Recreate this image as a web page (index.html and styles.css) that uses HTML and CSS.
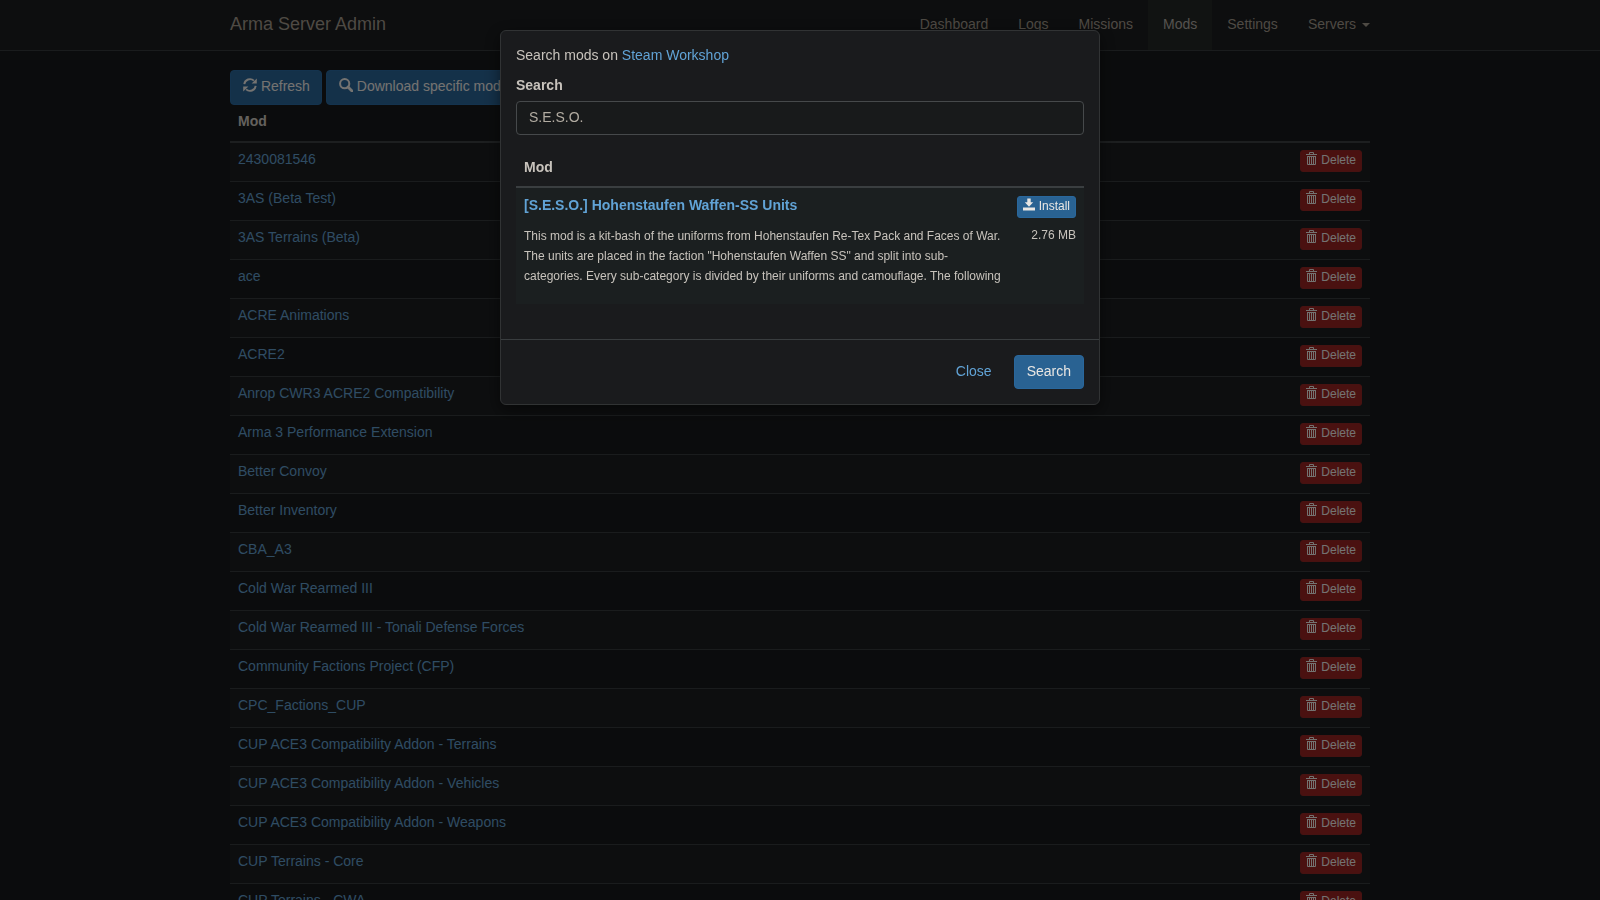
FILE: index.html
```html
<!DOCTYPE html>
<html lang="en">
<head>
<meta charset="utf-8">
<title>Arma Server Admin</title>
<link rel="stylesheet" href="styles.css">
</head>
<body>
<svg class="sprite" aria-hidden="true">
  <symbol id="i-refresh" viewBox="0 0 14 14">
    <path d="M1.3 6.2A5.8 5.8 0 0 1 10.9 2.6M12.7 7.8A5.8 5.8 0 0 1 3.1 11.4" fill="none" stroke="currentColor" stroke-width="1.9"/>
    <path d="M13.8.4V5.6H8.6zM.2 13.6V8.4H5.4z" fill="currentColor"/>
  </symbol>
  <symbol id="i-search" viewBox="0 0 14 14">
    <circle cx="5.7" cy="5.7" r="4.6" fill="none" stroke="currentColor" stroke-width="2"/>
    <path d="M9 9l4 4" stroke="currentColor" stroke-width="2.8" stroke-linecap="round"/>
  </symbol>
  <symbol id="i-trash" viewBox="0 0 12 13">
    <path d="M3.5 2V.5h4V2M0 2.5h11M1 4.5h9M1.5 4v8.5h8V4M3.5 5v7M5.5 5v7M7.5 5v7" fill="none" stroke="currentColor"/>
  </symbol>
  <symbol id="i-install" viewBox="0 0 12 12">
    <path d="M4.3 0h3.4v3.8h2.5L6 8.2 1.8 3.8h2.5zM0 9h12v3H0z" fill="currentColor"/>
  </symbol>
</svg>
<div class="page">
  <nav class="navbar">
    <div class="container navbar-inner">
      <a class="brand" href="#">Arma Server Admin</a>
      <ul class="nav">
        <li><a href="#">Dashboard</a></li>
        <li><a href="#">Logs</a></li>
        <li><a href="#">Missions</a></li>
        <li><a class="active" href="#">Mods</a></li>
        <li><a href="#">Settings</a></li>
        <li><a href="#">Servers <span class="caret"></span></a></li>
      </ul>
    </div>
  </nav>
  <main class="container">
    <div class="toolbar">
      <button class="btn btn-primary" type="button"><svg class="icon"><use href="#i-refresh"/></svg> Refresh</button>
      <button class="btn btn-primary" type="button"><svg class="icon"><use href="#i-search"/></svg> Download specific mod</button>
    </div>
    <table class="table mods">
      <thead><tr><th colspan="2">Mod</th></tr></thead>
      <tbody>
        <tr><td><a href="#">2430081546</a></td><td class="action"><button class="btn btn-xs btn-danger" type="button"><svg class="icon"><use href="#i-trash"/></svg> Delete</button></td></tr>
        <tr><td><a href="#">3AS (Beta Test)</a></td><td class="action"><button class="btn btn-xs btn-danger" type="button"><svg class="icon"><use href="#i-trash"/></svg> Delete</button></td></tr>
        <tr><td><a href="#">3AS Terrains (Beta)</a></td><td class="action"><button class="btn btn-xs btn-danger" type="button"><svg class="icon"><use href="#i-trash"/></svg> Delete</button></td></tr>
        <tr><td><a href="#">ace</a></td><td class="action"><button class="btn btn-xs btn-danger" type="button"><svg class="icon"><use href="#i-trash"/></svg> Delete</button></td></tr>
        <tr><td><a href="#">ACRE Animations</a></td><td class="action"><button class="btn btn-xs btn-danger" type="button"><svg class="icon"><use href="#i-trash"/></svg> Delete</button></td></tr>
        <tr><td><a href="#">ACRE2</a></td><td class="action"><button class="btn btn-xs btn-danger" type="button"><svg class="icon"><use href="#i-trash"/></svg> Delete</button></td></tr>
        <tr><td><a href="#">Anrop CWR3 ACRE2 Compatibility</a></td><td class="action"><button class="btn btn-xs btn-danger" type="button"><svg class="icon"><use href="#i-trash"/></svg> Delete</button></td></tr>
        <tr><td><a href="#">Arma 3 Performance Extension</a></td><td class="action"><button class="btn btn-xs btn-danger" type="button"><svg class="icon"><use href="#i-trash"/></svg> Delete</button></td></tr>
        <tr><td><a href="#">Better Convoy</a></td><td class="action"><button class="btn btn-xs btn-danger" type="button"><svg class="icon"><use href="#i-trash"/></svg> Delete</button></td></tr>
        <tr><td><a href="#">Better Inventory</a></td><td class="action"><button class="btn btn-xs btn-danger" type="button"><svg class="icon"><use href="#i-trash"/></svg> Delete</button></td></tr>
        <tr><td><a href="#">CBA_A3</a></td><td class="action"><button class="btn btn-xs btn-danger" type="button"><svg class="icon"><use href="#i-trash"/></svg> Delete</button></td></tr>
        <tr><td><a href="#">Cold War Rearmed III</a></td><td class="action"><button class="btn btn-xs btn-danger" type="button"><svg class="icon"><use href="#i-trash"/></svg> Delete</button></td></tr>
        <tr><td><a href="#">Cold War Rearmed III - Tonali Defense Forces</a></td><td class="action"><button class="btn btn-xs btn-danger" type="button"><svg class="icon"><use href="#i-trash"/></svg> Delete</button></td></tr>
        <tr><td><a href="#">Community Factions Project (CFP)</a></td><td class="action"><button class="btn btn-xs btn-danger" type="button"><svg class="icon"><use href="#i-trash"/></svg> Delete</button></td></tr>
        <tr><td><a href="#">CPC_Factions_CUP</a></td><td class="action"><button class="btn btn-xs btn-danger" type="button"><svg class="icon"><use href="#i-trash"/></svg> Delete</button></td></tr>
        <tr><td><a href="#">CUP ACE3 Compatibility Addon - Terrains</a></td><td class="action"><button class="btn btn-xs btn-danger" type="button"><svg class="icon"><use href="#i-trash"/></svg> Delete</button></td></tr>
        <tr><td><a href="#">CUP ACE3 Compatibility Addon - Vehicles</a></td><td class="action"><button class="btn btn-xs btn-danger" type="button"><svg class="icon"><use href="#i-trash"/></svg> Delete</button></td></tr>
        <tr><td><a href="#">CUP ACE3 Compatibility Addon - Weapons</a></td><td class="action"><button class="btn btn-xs btn-danger" type="button"><svg class="icon"><use href="#i-trash"/></svg> Delete</button></td></tr>
        <tr><td><a href="#">CUP Terrains - Core</a></td><td class="action"><button class="btn btn-xs btn-danger" type="button"><svg class="icon"><use href="#i-trash"/></svg> Delete</button></td></tr>
        <tr><td><a href="#">CUP Terrains - CWA</a></td><td class="action"><button class="btn btn-xs btn-danger" type="button"><svg class="icon"><use href="#i-trash"/></svg> Delete</button></td></tr>
      </tbody>
    </table>
  </main>
</div>
<div class="backdrop">
  <form class="modal" role="dialog" aria-modal="true">
    <div class="modal-body">
      <p>Search mods on <a href="#">Steam Workshop</a></p>
      <label for="query">Search</label>
      <input class="field" id="query" type="text" value="S.E.S.O.">
      <table class="table results">
        <thead><tr><th colspan="2">Mod</th></tr></thead>
        <tbody>
          <tr>
            <td>
              <p class="title"><a href="#">[S.E.S.O.] Hohenstaufen Waffen-SS Units</a></p>
              <p class="small">This mod is a kit-bash of the uniforms from Hohenstaufen Re-Tex Pack and Faces of War. The units are placed in the faction "Hohenstaufen Waffen SS" and split into sub-categories. Every sub-category is divided by their uniforms and camouflage. The following</p>
            </td>
            <td class="action">
              <button class="btn btn-xs btn-primary" type="button"><svg class="icon"><use href="#i-install"/></svg> Install</button>
              <p class="small size">2.76 MB</p>
            </td>
          </tr>
        </tbody>
      </table>
    </div>
    <div class="modal-footer">
      <button class="btn btn-link" type="button">Close</button>
      <button class="btn btn-primary" type="submit">Search</button>
    </div>
  </form>
</div>
</body>
</html>
```
FILE: styles.css
```css
* { box-sizing: border-box; }
body {
  margin: 0;
  background: #17191b;
  color: #c8c3bc;
  font: 14px/20px "Liberation Sans", Arial, sans-serif;
}
a { color: #61a3d6; text-decoration: none; }
p { margin: 0 0 10px; }
.sprite { display: none; }
.page { height: 100vh; overflow: hidden; }
.container { max-width: 1170px; margin: 0 auto; padding: 0 15px; }

.navbar { background: #1a1c1e; border-bottom: 1px solid #35393b; margin-bottom: 19px; }
.navbar-inner { display: flex; justify-content: space-between; }
.brand { padding: 14px 0 16px; font-size: 18px; color: #9d9488; }
.nav { display: flex; margin: 0 -15px 0 0; padding: 0; list-style: none; }
.nav a { display: block; padding: 14px 15px 16px; color: #9d9488; }
.nav .active { background: #232625; color: #aaa59e; }
.caret {
  display: inline-block;
  margin-left: 2px;
  vertical-align: middle;
  border-top: 4px solid;
  border-left: 4px solid transparent;
  border-right: 4px solid transparent;
}

.toolbar { display: flex; gap: 4px; }
.toolbar .btn { padding: 5px 11px 8px 12px; }
.btn {
  padding: 5px 12px 7px;
  border: 1px solid transparent;
  border-radius: 4px;
  background: none;
  color: #e8e6e3;
  font: inherit;
  white-space: nowrap;
}
.btn-primary { background: #296292; border-color: #29679c; }
.btn-danger { background: #952321; border-color: #8e2522; }
.btn-link { color: #61a3d6; }
.btn-xs { display: block; padding: 0 5px 2px; border-radius: 3px; font-size: 12px; line-height: 18px; }
.icon { width: 14px; height: 14px; vertical-align: -1px; }
.btn-xs .icon { width: 12px; height: 13px; }

.table { width: 100%; border-collapse: collapse; }
.table th { padding: 7px 8px 9px; text-align: left; border-bottom: 2px solid #3a3e40; }
.table td { padding: 8px; vertical-align: top; border-top: 1px solid #35393b; }
.table tbody tr:first-child td { border-top: 0; }
.table .action { width: 1px; }
.mods th { padding: 6px 8px 10px; }
.mods td { padding: 7px 8px 9px; line-height: 18px; }
.mods a { color: #5f99c6; }
.mods tbody tr:nth-child(odd) { background: #1b1d1f; }

.backdrop {
  position: fixed;
  inset: 0;
  padding: 30px;
  background: rgba(0, 0, 0, .5);
}
.modal {
  max-width: 600px;
  margin: 0 auto;
  background: #1a1b1d;
  border: 1px solid #313334;
  border-radius: 6px;
  box-shadow: 0 5px 15px rgba(0, 0, 0, .5);
}
.modal-body { padding: 14px 15px 15px; }
.modal label { display: block; margin-bottom: 6px; font-weight: bold; }
.field {
  display: block;
  width: 100%;
  height: 34px;
  margin-bottom: 15px;
  padding: 5px 12px 7px;
  border: 1px solid #46494b;
  border-radius: 4px;
  background: #181a1b;
  color: #b2aca2;
  font: inherit;
}
.results { margin-bottom: 20px; }
.results tbody tr { background: #1b1f20; }
.title { margin-bottom: 12px; line-height: 18px; font-weight: bold; }
.small { font-size: 12px; }
.size { margin-top: 7px; text-align: right; }
.modal-footer {
  display: flex;
  justify-content: flex-end;
  gap: 9px;
  padding: 15px;
  border-top: 1px solid #393d3f;
}
```
